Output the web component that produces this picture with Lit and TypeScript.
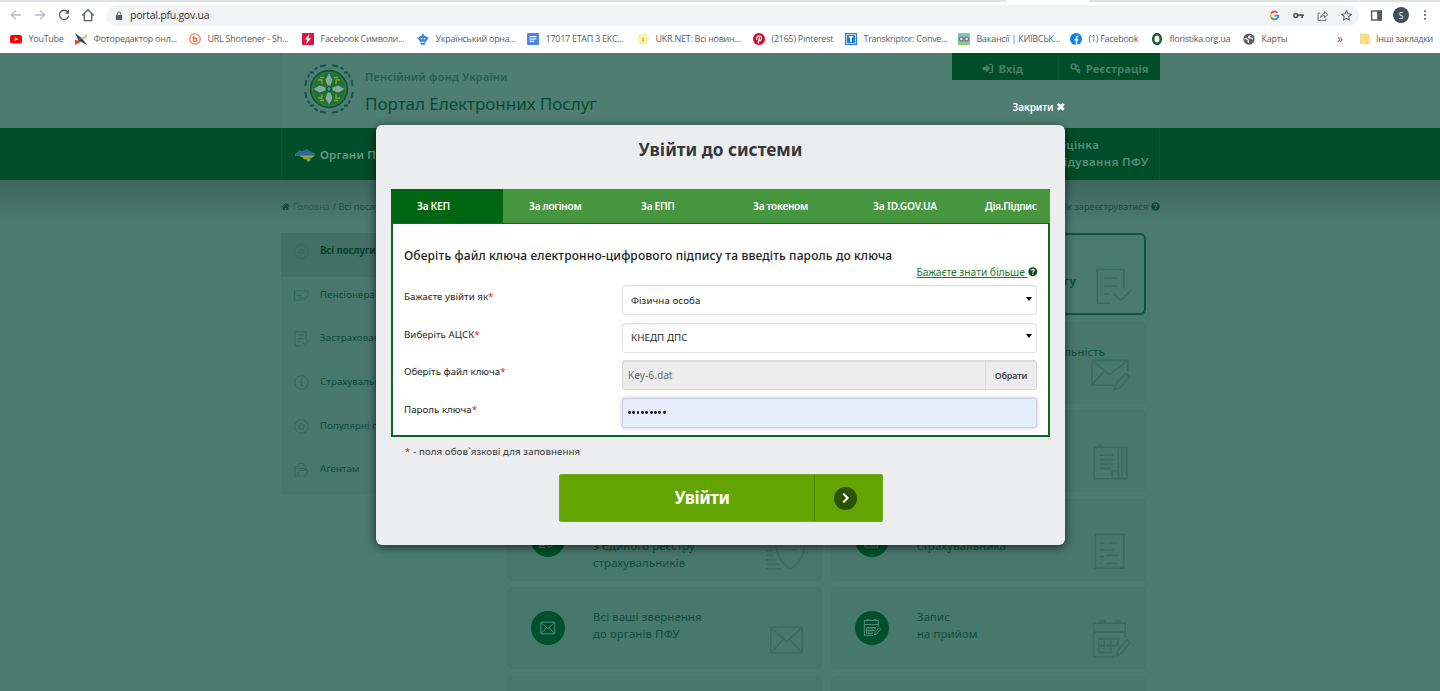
import { LitElement, html, css, svg, nothing } from "lit";
import { customElement, state } from "lit/decorators.js";

const glyphs: Record<string, unknown> = {
  back: svg`<path d="M13.500 8H3M7.800 3L2.800 8l5 5"/>`,
  forward: svg`<path d="M2.500 8H13M8.200 3l5 5-5 5"/>`,
  reload: svg`<path d="M12.600 5A5.300 5.300 0 1 0 13.300 9"/><path d="M13.800 1.800v4.700H9z" fill="currentColor" stroke="none"/>`,
  home: svg`<path d="M1.500 8.500L8 2l6.500 6.500M3.800 7v7.500h8.400V7"/>`,
  lock: svg`<rect x="3" y="6.500" width="10" height="8" rx="1" fill="currentColor" stroke="none"/><path d="M5.200 7V4.500a2.800 2.800 0 0 1 5.600 0V7"/>`,
  google: svg`<g stroke-width="2.600"><path d="M12.400 4A5.600 5.600 0 0 0 3.200 5.300" stroke="#ea4335"/><path d="M3.200 5.300a5.600 5.600 0 0 0 0 5.500" stroke="#fbbc05"/><path d="M3.200 10.800a5.600 5.600 0 0 0 8.400 1.500" stroke="#34a853"/><path d="M11.600 12.300A5.600 5.600 0 0 0 13.600 8.300H8.200" stroke="#4285f4"/></g>`,
  key: svg`<circle cx="4" cy="8" r="2.700" stroke-width="2.400"/><path d="M7 7.600h9M13.300 8v3.600" stroke-width="2.600"/>`,
  share: svg`<path d="M4 4.500H1.500V15H13v-3M5 11c.5-4 3-5.500 6-5.500V2l5 4.700-5 4.300V8.200C8.500 8.200 6.500 9 5 11z" stroke-width="1.300"/>`,
  star: svg`<path d="M8 1.200l2.100 4.400 4.700.6-3.400 3.300.8 4.900L8 12l-4.200 2.400.8-4.900-3.400-3.300 4.700-.6z"/>`,
  panel: svg`<rect x="2" y="2.500" width="12" height="11" stroke-width="1.800"/><path d="M9.500 2.500H14v11H9.500z" fill="currentColor"/>`,
  more: svg`<g fill="currentColor" stroke="none"><circle cx="8" cy="3" r="1.400"/><circle cx="8" cy="8" r="1.400"/><circle cx="8" cy="13" r="1.400"/></g>`,
  youtube: svg`<rect x="0" y="2.500" width="16" height="11.500" rx="3" fill="#f00" stroke="none"/><path d="M6.300 5.600v5l4.500-2.500z" fill="#fff" stroke="none"/>`,
  fotor: svg`<g stroke="none"><path d="M0 0l9 6.500L4.500 10z" fill="#24507c"/><path d="M0 16V9l4 1 5-3L6 13z" fill="#e14b2a"/><path d="M16 16L9 6.500 5 10z" fill="#243f60"/><path d="M16 1v5l-5 3-3-2z" fill="#d9c59a"/></g>`,
  short: svg`<circle cx="8" cy="8" r="7" stroke="#e2714e" stroke-width="1.500"/><path d="M6 3.500v8M6 8c2-2.500 5-1 4.500 1.500S7 12 6 10.500" stroke="#e2714e" stroke-width="2"/>`,
  symbols: svg`<rect width="16" height="16" rx="1" fill="#d8173f" stroke="none"/><path d="M10 1L4 8.500h3L5.500 15 12 7H8.500z" fill="#fff" stroke="none"/>`,
  ornament: svg`<g fill="#3d82dd" stroke="none"><path d="M8 0l2 4H6z"/><rect x="2.500" y="3.500" width="11" height="8" rx="3.500"/><path d="M4 10h8l-1.500 5.500h-5zM0 6l4 0-1 4zM16 6l-4 0 1 4z"/></g><path d="M5 7.500h2M9 7.500h2M6 12.500h4" stroke="#fff"/>`,
  docs: svg`<rect x="0" width="16" height="16" rx="1.500" fill="#4c84ec" stroke="none"/><path d="M3.500 4.800h9M3.500 8h9M3.500 11.200h6" stroke="#fff" stroke-width="1.500"/>`,
  ukr: svg`<circle cx="8" cy="8" r="6.500" fill="#fff4a5" stroke="#fbe999" stroke-width="2" stroke-dasharray="2 1"/><path d="M6.500 10.500h3M8 5.500v5" stroke="#d7a53b"/>`,
  pinterest: svg`<circle cx="8" cy="8" r="8" fill="#db0a28" stroke="none"/><path d="M6.800 14l2-8M5.200 9C3 4 11.500 2 11.500 6.800c0 3.500-3.500 4.500-4.200 2.500" stroke="#fff" stroke-width="1.600"/>`,
  transk: svg`<rect width="16" height="16" fill="#1877dc" stroke="none"/><rect x="2" y="2" width="12" height="12" stroke="#b8dcff"/><path d="M5 5h6M8 5v7" stroke="#fff" stroke-width="2.200"/>`,
  jobs: svg`<rect width="16" height="16" fill="#7cc6c1" stroke="none"/><path d="M0 13h16v3H0z" fill="#9cc94f" stroke="none"/><circle cx="4.500" cy="8" r="2.600" stroke="#845a91" fill="#dfe6ae"/><circle cx="11.500" cy="8" r="2.600" stroke="#845a91" fill="#dfe6ae"/>`,
  facebook: svg`<circle cx="8" cy="8" r="8" fill="#0c84ee" stroke="none"/><path d="M8.700 16V6.500c0-1.700.8-2.300 2.300-2.200M6 9h5" stroke="#fff" stroke-width="2"/>`,
  floristika: svg`<ellipse cx="8" cy="8" rx="5" ry="6.500" stroke="#1d5a33" stroke-width="3.400"/>`,
  globe: svg`<circle cx="8" cy="8" r="7.500" fill="#5b5f63" stroke="none"/><path d="M2 7.500c2-.5 3.500.5 4.500 1.500s0 2 1 4M10 2.500c0 2-2 1.500-2.500 2.700s1 1.500 2.500 1.300 1.500 1.500 3.500 1.500" stroke="#fff" stroke-width="1.700"/>`,
  folder: svg`<path d="M2 1h12v14H2z" fill="#fbdd80" stroke="none"/><path d="M11 15l3-3h-3z" fill="#e9c35f" stroke="none"/>`,
  enter: svg`<path d="M1 5.500h5V2l6 6-6 6v-3.500H1z" fill="currentColor" stroke="none"/><path d="M10 2h3.500c1 0 1.500.5 1.500 1.500v9c0 1-.5 1.500-1.500 1.500H10" stroke-width="2"/>`,
  keys: svg`<circle cx="5.200" cy="5" r="3.500" stroke-width="2.400"/><path d="M7.500 7.500L12 12" stroke-width="2.400"/><circle cx="12.500" cy="11.500" r="2" stroke-width="1.800"/><path d="M10 2.500l3 4M13 13.500l1.500 2" stroke-width="1.600"/>`,
  house: svg`<path d="M8 2L.5 8.500l1 1L8 4l6.500 5.500 1-1L13 6.300V2.500h-2v2zM8 5.300L3 9.500V14h3.700v-3.500h2.600V14H13V9.500z" fill="currentColor" stroke="none"/>`,
  question: svg`<circle cx="8" cy="8" r="7.500" fill="currentColor" stroke="none"/><path class="ink" d="M5.700 6c.2-3 5-2.500 4.700 0-.2 1.500-2.200 1.500-2.200 3.600M8.200 11v2" stroke-width="2"/>`,
  cross: svg`<path d="M3 3l10 10M13 3L3 13" stroke-width="4.400"/>`,
  target: svg`<circle cx="8" cy="8" r="7.200"/><circle cx="8" cy="8" r="2.300"/>`,
  info: svg`<circle cx="8" cy="8" r="7.200"/><path d="M8 3.800v1.400M7 7h1v4.500M6.800 11.700h2.500"/>`,
  badge: svg`<circle cx="8" cy="8" r="7.200"/><path d="M8 4.500l1.200 2.200 2.300.4-1.700 1.700.4 2.500L8 10.200l-2.200 1.100.4-2.500-1.700-1.700 2.300-.4z"/>`,
  cardpen: svg`<path d="M15 6V3H.5v10h9M.5 5.500l3 2.500h4M5 10.500h4M9.500 11.500l1.500 1 5-5.500"/>`,
  doccheck: svg`<path d="M12.800 9V.7H1v15h6M4 4.500h6M4 8h6M4 11.500h2.500M8.500 11.500l3 2.900 4.500-4.500"/>`,
  folderHand: svg`<path d="M1 15V5h3l2 2h6v2M1 15h11l3-6H6l-3 5M4 5V1.500h6l3 3V9M10 1.500v3h3"/>`,
  envelope: svg`<rect x=".8" y="2.200" width="14" height="11.600" rx=".8"/><path d="M1.300 2.700L7.800 8.800l6.500-6.100M1.300 13.300l5-5.500M14.300 13.300l-5-5.500"/>`,
  mailpen: svg`<path d="M15.500 6.500V1.500H-.5V12.500h9.500M-.5 1.500l7.800 6.300L15.500 1.500M-.5 12.500L4.800 6.500M9.500 14.500l.6-2.500L14.500 7.300l1.700 1.500-4.300 5z"/>`,
  papers: svg`<path d="M.5 1h10.800v14H.5zM11.300 1h1.600V15h-1.600M13.500 1h1.500v14h-1.500M3 4.500h6M3 6.500h6M3 8.500h6M3 10.500h5M8.500 14.500v-3h3M1.500 1.500l1.500-1.500 1 1.500"/>`,
  shield: svg`<path d="M9.500 1c2 1.200 3.500 1.500 6.500 1.600C16 9 14 12.900 9.500 15.500 5 12.900 3 9 3 2.600 6 2.500 7.500 2.200 9.500 1zM6.500 7h6M-1.500 7.500h3M-1 9.500h3M-1.500 11.500h4.500M-1 13.500h5.500M-1.500 15.500h7"/>`,
  checklist: svg`<rect x="1" y=".2" width="12.700" height="15"/><path d="M3 4h2M7 4h4.500M3 7h6M3 10h2M6 9.500h5.500M3 13h1M6 13h5.500"/>`,
  calendar: svg`<path d="M14.300 7V.5H.3v15h9M.3 4.500h14M2.500 7.500h9.500M2.500 10.500h8M2.500 13.500h6M2.500 7.500v6M5 7.500v6M8 7.500v6M11 7.500v3M3 .5a1.200 1.200 0 1 1 2.400 0M10 .5a1.200 1.200 0 1 1 2.400 0M10.500 15l.6-2.500L15 7.800l1.500 1.300-3.900 4.800z"/>`,
  chevron: svg`<path d="M6 3l5 5-5 5" stroke-width="2.400"/>`,
};

const icon = (name: string, cls = "") =>
  html`<svg class="ic ${cls}" viewBox="0 0 16 16" fill="none" stroke="currentColor" stroke-width="1.500">${glyphs[name]}</svg>`;

const iconBase = css`
  .ic { width: 12px; height: 12px; display: block; flex: none; overflow: visible; }
`;

@customElement("browser-bar")
class BrowserBar extends LitElement {
  static styles = [iconBase, css`
    :host { display: block; height: 53px; background: #fff; overflow: hidden; font: 9px "Open Sans", "Noto Sans", sans-serif; color: #5a5e62; }
    .strip { display: flex; height: 2px; background: #dee1e6; }
    .strip i { margin-left: 1006px; width: 83px; background: #fff; }
    .tools { display: grid; grid-template-columns: 24px 24px 24px 25px 1264px 16px 1fr 21px; height: 26px; align-items: center; padding: 0 0 0 9px; box-sizing: border-box; }
    .tools > .ic { width: 14px; height: 14px; color: #5a5e62; justify-self: start; }
    .tools > .faint { color: #b7babd; }
    .address { display: flex; align-items: center; height: 21px; background: #f1f3f4; border-radius: 11px; margin-top: 1px; padding: 0 7px 0 8px; width: 1253px; box-sizing: border-box; }
    .address .ic { width: 10px; height: 10px; }
    .url { font-size: 10.500px; color: #303236; margin: -1px 0 0 6px; flex: 1; letter-spacing: -.25px; }
    .right { display: flex; gap: 13px; }
    .right .ic { width: 11px; height: 11px; }
    .face { width: 16px; height: 16px; border-radius: 50%; background: #3c5160; color: #fff; display: grid; place-items: center; font-size: 8.500px; margin-left: 7px; }
    .tools > .panel { width: 13px; height: 13px; }
    .tools > .end { width: 12px; height: 12px; }
    .marks { display: grid; height: 21px; align-items: center; padding-left: 10px; white-space: nowrap;
      grid-template-columns: 65px 114px 113px 115px 110px 110px 116px 92px 113px 112px 81px 92px 94px 23px 1fr; letter-spacing: -.27px; }
    .mark { display: flex; align-items: center; gap: 6.500px; }
    .other { display: flex; align-items: center; gap: 5px; border-left: 1px solid #d9dbde; height: 11px; }
    .other .ic { margin-left: -2px; }
    .sq { font-size: 12px; }
  `];
  marks = [
    ["youtube", "YouTube"], ["fotor", "Фоторедактор онл..."], ["short", "URL Shortener - Sh..."],
    ["symbols", "Facebook Символи..."], ["ornament", "Український орна..."], ["docs", "17017 ЕТАП 3 ЕКС..."],
    ["ukr", "UKR.NET: Всі новин..."], ["pinterest", "(2165) Pinterest"], ["transk", "Transkriptor: Conve..."],
    ["jobs", "Вакансії | КИЇВСЬК..."], ["facebook", "(1) Facebook"], ["floristika", "floristika.org.ua"], ["globe", "Карты"],
  ];
  render() {
    return html`
      <div class="strip"><i></i></div>
      <div class="tools">
        ${icon("back", "faint")}${icon("forward", "faint")}${icon("reload")}${icon("home")}
        <div class="address">${icon("lock")}<span class="url">portal.pfu.gov.ua</span>
          <div class="right">${icon("google")}${icon("key")}${icon("share")}${icon("star")}</div></div>
        ${icon("panel", "panel")}<div class="face">S</div>${icon("more", "end")}
      </div>
      <div class="marks">
        ${this.marks.map(([g, t]) => html`<div class="mark">${icon(g)}<span>${t}</span></div>`)}
        <span class="sq">»</span>
        <div class="other">${icon("folder")}<span>Інші закладки</span></div>
      </div>`;
  }
}

@customElement("portal-page")
class PortalPage extends LitElement {
  static styles = [iconBase, css`
    :host { display: block; height: 638px; overflow: hidden; background: #4b7b6f; color: #104d37; font-family: "Noto Sans", sans-serif; white-space: nowrap; }
    .wrap { width: 879px; margin-left: 281px; box-sizing: border-box; }
    .head { height: 75px; display: flex; border-left: 1px solid #45776a; background: #4d7e71; }
    .emblem { width: 50px; height: 50px; margin: 11px 0 0 22px; }
    .names { margin-left: 11px; flex: 1; }
    .org { font-size: 11px; font-weight: 600; color: #285f4f; line-height: 15px; margin-top: 16px; letter-spacing: .21px; }
    .portal { font-size: 17px; line-height: 24px; margin-top: 8px; color: #064a35; letter-spacing: -.02px; }
    .auth { display: flex; height: 27px; width: 208px; background: #004d2a; color: #4a7e68; font-size: 11.200px; font-weight: 700; }
    .auth div { flex: 1; display: flex; align-items: center; justify-content: center; gap: 5px; padding-top: 4px; height: 23px; letter-spacing: .1px; }
    .auth div:first-child { padding-right: 4px; }
    .auth div + div { border-left: 1px solid #075632; }
    .auth .ic { width: 11px; height: 11px; }
    .nav { background: #004d2a; height: 52px; }
    .nav .wrap { height: 52px; border: 1px solid #075632; border-width: 0 1px; display: flex; align-items: center; color: #6c9884; font-size: 11.500px; font-weight: 600; justify-content: space-between; padding: 0 11px 0 12px; }
    .organs { display: flex; align-items: center; gap: 4px; letter-spacing: .2px; }
    .map { width: 22px; height: 15px; margin-top: 2px; }
    .rate { line-height: 17px; width: 91px; letter-spacing: .36px; color: #5b8d77; padding-bottom: 3px; }
    .under { background: linear-gradient(#3e675d, #4b7b6f 46px); height: 53px; }
    .crumbs { display: flex; justify-content: space-between; align-items: center; font-size: 9.200px; height: 52px; color: #194f40; letter-spacing: .02px; }
    .crumbs div { display: flex; align-items: center; gap: 3px; }
    .crumbs .ic { width: 9px; height: 9px; color: #0b4a32; }
    .crumbs a { color: #245f4c; }
    .ink { stroke: #4b7b6f; }
    .body { display: flex; justify-content: space-between; padding: 0 14px 0 0; align-items: flex-start; }
    .side { background: #48776b; width: 212px; }
    .side div { height: 43.600px; display: flex; align-items: center; gap: 11px; padding-left: 13px; font-size: 9.700px; box-sizing: border-box; padding-bottom: 8px; color: #0f4b38; letter-spacing: .1px; }
    .side .ic { width: 15px; height: 15px; color: #34685a; stroke-width: 1; margin-top: 2px; }
    .side .on { background: #437066; font-weight: 700; color: #063e29; letter-spacing: -.12px; }
    .cards { display: grid; grid-template-columns: 315px 315px; gap: 6.500px 9px; }
    .card { height: 82px; border-radius: 6px; background: #48776b; box-sizing: border-box; border: 1px solid #467569; display: grid; grid-template-columns: 85px minmax(0, 1fr) 51px; font-size: 11.300px; line-height: 17px; letter-spacing: .15px; }
    .card.on { border: 2px solid #115540; font-weight: 700; background: #4a7a6e; }
    .disc { width: 34px; height: 34px; border-radius: 50%; background: #004f2d; display: grid; place-items: center; margin: 23px 0 0 23px; color: #5e927c; }
    .disc .ic { width: 16px; height: 16px; stroke-width: .9; }
    .txt { padding-top: 20px; width: 180px; }
    .txt.wide { width: 188px; text-align: right; }
    .on .txt.wide { width: 158px; padding-top: 20px; }
    .card > .ic { width: 36px; height: 36px; margin: 34px 0 0 -1px; color: #3b6b5f; stroke-width: .7; }
    .card.on > .ic { margin-left: 2px; margin-top: 33px; }
  `];
  cards = [
    { t: [], d: "target", i: "" }, { t: ["", "Замовити послугу"], d: "doccheck", i: "doccheck", on: true, wide: true },
    { t: [], d: "target", i: "" }, { t: ["Трудова діяльність"], d: "mailpen", i: "mailpen", wide: true },
    { t: [], d: "target", i: "" }, { t: [], d: "papers", i: "papers" },
    { t: ["Інформація", "з Єдиного реєстру", "страхувальників"], d: "shield", i: "shield" },
    { t: ["Кабінет", "страхувальника"], d: "checklist", i: "checklist" },
    { t: ["Всі ваші звернення", "до органів ПФУ"], d: "envelope", i: "envelope" },
    { t: ["Запис", "на прийом"], d: "calendar", i: "calendar" },
    { t: [], d: "", i: "" }, { t: [], d: "", i: "" },
  ] as { t: string[]; d: string; i: string; on?: boolean; wide?: boolean }[];
  side = [["target", "Всі послуги"], ["cardpen", "Пенсіонерам"], ["doccheck", "Застрахованим"], ["info", "Страхувальникам"], ["badge", "Популярні послуги"], ["folderHand", "Агентам"]];
  // The second line of a two-line card sits under the first one; an empty string keeps its line.
  render() {
    return html`
      <div class="wrap head">
        <svg class="emblem" viewBox="0 0 50 50" fill="none">
          <g stroke="#175443" stroke-width="2"><circle cx="25" cy="25" r="20.500" fill="#547f79" stroke-width="0"/>
          <path d="M16 2.500l6-1.200M28 1.300l6 1.200M10.500 5.500l3-1.800M36.500 3.700l3 1.800M16 47.500l6 1.200M28 48.700l6-1.200M10.500 44.500l3 1.800M36.500 46.300l3-1.800M2.500 16l-1.200 6M1.300 28l1.200 6M5.500 10.500L4 13.500M4 36.500l1.500 3M47.500 16l1.200 6M48.700 28l-1.200 6M44.500 10.500l1.500 3M46 36.500l-1.500 3M6 8.500l4 0M40 8.500h4M6 41.500h4M40 41.500h4"/></g>
          <circle cx="25" cy="25" r="18.500" fill="#226f33" stroke="#174e45" stroke-width="1.500"/>
          <circle cx="25" cy="25" r="16.500" stroke="#4a8749" stroke-width=".6"/>
          <g fill="#83aaa0"><path d="M23.500 21.500l-2-6L25 9.500l3.500 6-2 6zM23.500 28.500l-2 6 3.500 6 3.500-6-2-6zM21.500 23.500l-6-2-6 3.500 6 3.500 6-2zM28.500 23.500l6-2 6 3.500-6 3.500-6-2z"/></g>
          <g stroke="#80a82e" stroke-width="1.300"><path d="M14 16h4v4M16 13.500h4M36 16h-4v4M34 13.500h-4M14 34h4v-4M16 36.500h4M36 34h-4v-4M34 36.500h-4"/></g>
          <circle cx="25" cy="25" r="2.800" fill="#0e5b35"/><path d="M25 23v4M23.500 25h3" stroke="#7ba49a"/>
        </svg>
        <div class="names"><div class="org">Пенсійний фонд України</div><div class="portal">Портал Електронних Послуг</div></div>
        <div class="auth"><div>${icon("enter")}Вхід</div><div>${icon("keys")}Реєстрація</div></div>
      </div>
      <div class="nav"><div class="wrap">
        <div class="organs">
          <svg class="map" viewBox="0 0 22 15"><path d="M1 6l3-2 1-2 4 1 4-2 3 2 5 2.500-1 2.500H1z" fill="#2d6c91"/><path d="M7 7.500h14l-4 3h-2l2 1.500-3 2-2-3-2 .5-1-2-3-.5z" fill="#8ea53b"/></svg>
          Органи ПФУ</div>
        <div class="rate">Оцінка<br>відування ПФУ</div>
      </div></div>
      <div class="under"><div class="wrap crumbs">
        <div>${icon("house")}<a>Головна</a> / Всі послуги</div><div>Як зареєструватися ${icon("question")}</div>
      </div></div>
      <div class="wrap body">
        <div class="side">${this.side.map(([g, t], n) => html`<div class=${n ? "" : "on"}>${icon(g)}${t}</div>`)}</div>
        <div class="cards">${this.cards.map(c => html`
          <div class="card ${c.on ? "on" : ""}">
            ${c.d ? html`<div class="disc">${icon(c.d)}</div>` : nothing}
            <div class="txt ${c.wide ? "wide" : ""}">${c.t.map(l => html`${l}<br>`)}</div>
            ${c.i ? icon(c.i) : nothing}
          </div>`)}</div>
      </div>`;
  }
}

@customElement("login-dialog")
class LoginDialog extends LitElement {
  @state() tab = 0;
  tabs = ["За КЕП", "За логіном", "За ЕПП", "За токеном", "За ID.GOV.UA", "Дія.Підпис"];
  static styles = [iconBase, css`
    :host { display: block; width: 689px; font-family: "Noto Sans", sans-serif; color: #222; white-space: nowrap; }
    .close { display: flex; justify-content: flex-end; align-items: center; gap: 2px; color: #fff; font-size: 10px; font-weight: 600; height: 14px; padding-bottom: 11px; letter-spacing: -.12px; }
    .close .ic { width: 9.500px; height: 9.500px; }
    .box { height: 420px; border-radius: 6px; background: #ecedef; box-shadow: 0 2px 10px rgba(0,0,0,.65); box-sizing: border-box; padding: 0 15px; }
    h1 { margin: 0; height: 64px; padding-top: 11px; box-sizing: border-box; text-align: center; font: 700 17.300px/27px "Noto Sans", sans-serif; color: #36383b; }
    .tabs { display: grid; grid-template-columns: 112px 112px 112px 120px 112px 91px; background: #45963f; color: #fff; font-size: 10.200px; font-weight: 600; height: 34px; }
    .tabs div { display: flex; align-items: center; padding: 0 0 0 26px; letter-spacing: -.33px; }
    .tabs .on { background: #016611; }
    .tabs div:nth-child(5) { letter-spacing: -.15px; }
    .pane { height: 214px; box-sizing: border-box; border: 2px solid #0c6821; border-top: 1px solid #0c6821; background: #fff; padding: 23px 11px 0; }
    h2 { margin: 0; font: 500 12px/18px "Noto Sans", sans-serif; color: #1b1b1b; letter-spacing: .135px; }
    .more { display: flex; justify-content: flex-end; align-items: center; height: 14px; line-height: 14px; color: #117a2b; font-size: 10.200px; }
    .more u { text-underline-offset: 1px; }
    .more .ic { width: 9.500px; height: 9.500px; color: #0b4d1c; }
    .ink { stroke: #fff; }
    .row { display: grid; grid-template-columns: 218px 415px; height: 37.500px; font-size: 9.700px; color: #232323; }
    .row label { padding-top: 5px; line-height: 14px; letter-spacing: .04px; }
    .rows { padding-top: 6px; }
    em { color: #e11; font-style: normal; }
    .field { height: 30px; box-sizing: border-box; border: 1px solid #e1e3e6; border-radius: 3px; box-shadow: inset 0 1px 1px rgba(0,0,0,.07); display: flex; align-items: center; justify-content: space-between; padding: 0 4px 0 8px; letter-spacing: .1px; }
    .arrow { border: 3.500px solid transparent; border-top: 4px solid #000; border-bottom: 0; margin-top: -3px; }
    .file { background: #ececec; border-color: #d9d9d9; padding: 0 0 0 5px; color: #6c6c6c; font-size: 10.200px; letter-spacing: 0; }
    .pick { width: 50px; height: 28px; border-left: 1px solid #ddd; line-height: 29px; text-align: center; color: #444; font-weight: 600; font-size: 9px; letter-spacing: -.15px; }
    .pass { background: #e6edfc; border-color: #ccd3de; padding-left: 5px; box-shadow: 0 0 4px rgba(60,80,110,.35); justify-content: flex-start; gap: 1.550px; }
    .pass i { width: 2.800px; height: 2.800px; border-radius: 50%; background: #111; }
    .note { font-size: 9.700px; line-height: 14px; margin: 8px 0 0 14px; letter-spacing: .1px; color: #333; }
    .go { display: grid; grid-template-columns: 255px 69px; width: 324px; height: 48px; margin: 15px auto 0; box-sizing: border-box; background: #63a400; border-radius: 3px; box-shadow: inset 0 0 0 1px #70ad1c; color: #fff; font-size: 17px; font-weight: 700; align-items: center; }
    .go span { padding: 0 0 2px 116px; letter-spacing: -.45px; }
    .arrowbox { border-left: 1px solid #4f8a00; height: 46px; display: flex; align-items: center; padding-left: 19px; }
    .knob { width: 23px; height: 23px; border-radius: 50%; background: #2b5206; display: grid; place-items: center; }
    .knob .ic { width: 14px; height: 14px; }
  `];
  render() {
    return html`
      <div class="close">Закрити ${icon("cross")}</div>
      <div class="box">
        <h1>Увійти до системи</h1>
        <div class="tabs">${this.tabs.map((t, n) => html`<div class=${n === this.tab ? "on" : ""} @click=${() => (this.tab = n)}>${t}</div>`)}</div>
        <div class="pane">
          <h2>Оберіть файл ключа електронно-цифрового підпису та введіть пароль до ключа</h2>
          <div class="more"><u>Бажаєте знати більше&nbsp;</u>${icon("question")}</div>
          <div class="rows">
            <div class="row"><label>Бажаєте увійти як<em>*</em></label><div class="field">Фізична особа<i class="arrow"></i></div></div>
            <div class="row"><label>Виберіть АЦСК<em>*</em></label><div class="field">КНЕДП ДПС<i class="arrow"></i></div></div>
            <div class="row"><label>Оберіть файл ключа<em>*</em></label><div class="field file">Key-6.dat<div class="pick">Обрати</div></div></div>
            <div class="row"><label>Пароль ключа<em>*</em></label><div class="field pass">${Array.from({ length: 9 }, () => html`<i></i>`)}</div></div>
          </div>
        </div>
        <div class="note"><em>*</em> - поля обов\`язкові для заповнення</div>
        <div class="go"><span>Увійти</span><div class="arrowbox"><div class="knob">${icon("chevron")}</div></div></div>
      </div>`;
  }
}

@customElement("app-root")
class AppRoot extends LitElement {
  static styles = css`
    :host { display: block; width: 1440px; height: 691px; overflow: hidden; position: relative; }
    login-dialog { position: absolute; left: 376px; top: 100px; }
  `;
  render() {
    return html`<browser-bar></browser-bar><portal-page></portal-page><login-dialog></login-dialog>`;
  }
}
